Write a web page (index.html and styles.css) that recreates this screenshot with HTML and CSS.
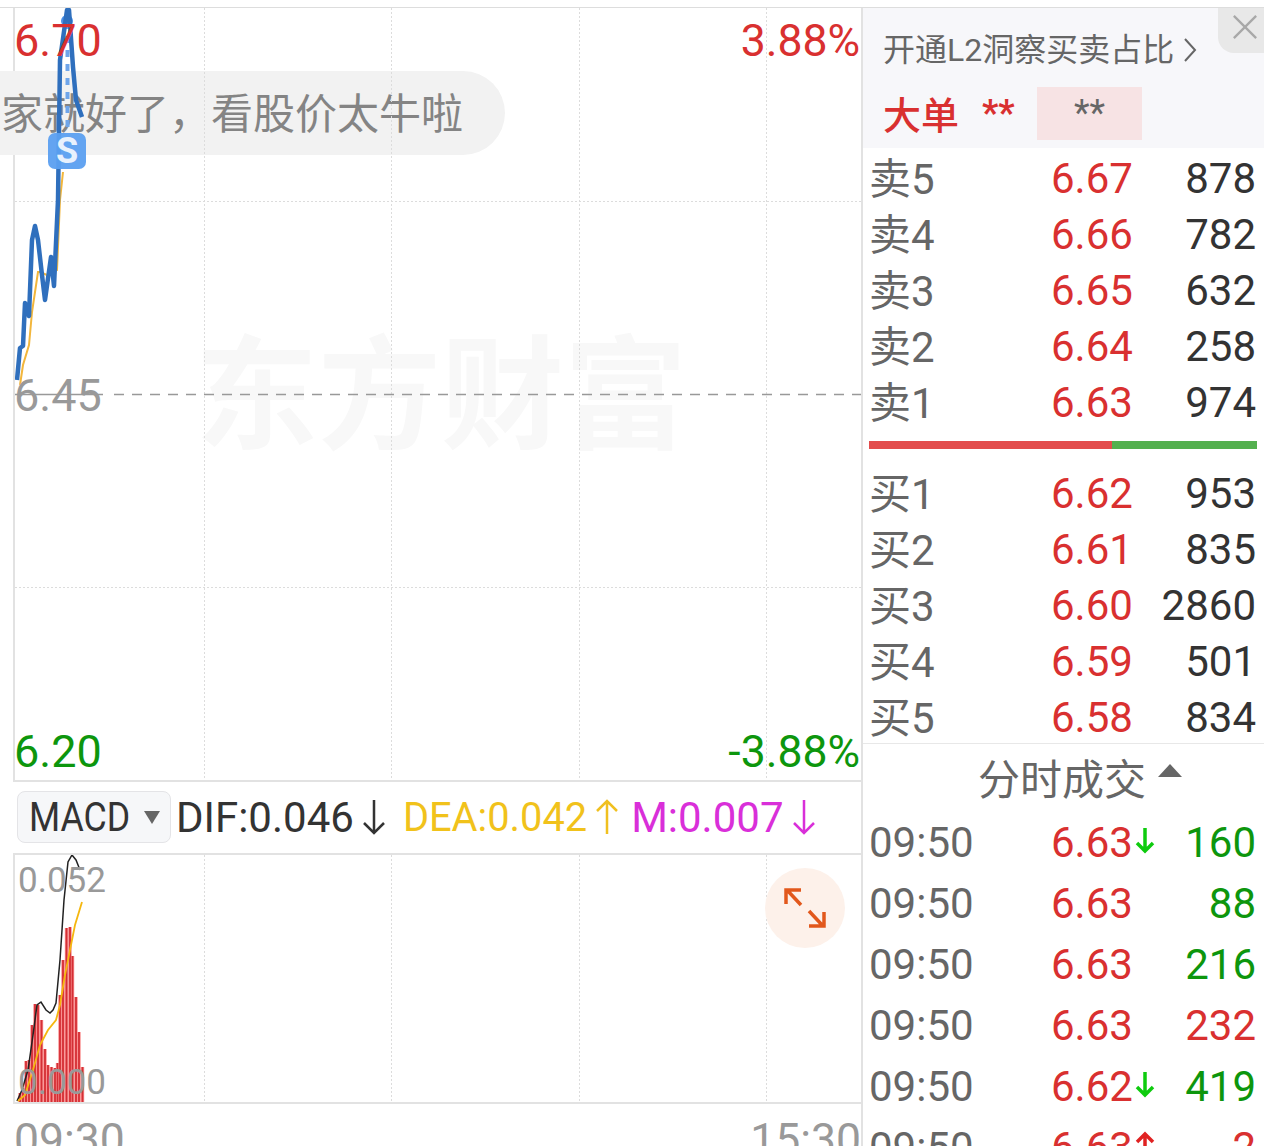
FILE: index.html

```html
<!DOCTYPE html>
<html lang="zh-CN">
<head>
<meta charset="utf-8"/>
<title>分时</title>
<link rel="stylesheet" href="styles.css">
</head>
<body>
<div class="page">
  <div class="left">
    <div class="chart">
      <div class="watermark">东方财富</div>
      <div class="bubble">家就好了，看股价太牛啦</div>
      <svg class="chart-svg" viewBox="15 8 846 772">
        <path d="M204.500 8V780M391.500 8V780M579.500 8V780M766.500 8V780M15 201.500H861M15 587.500H861" stroke="#dcdcdc" stroke-width="1" stroke-dasharray="2 2" fill="none"/>
        <path d="M15 394.500H103" stroke="#999" stroke-width="1.500" fill="none"/>
        <path d="M114 394.500H861" stroke="#999" stroke-width="1.500" stroke-dasharray="10 8" fill="none"/>
        <path d="M67.500 22V133" stroke="#6fa5ea" stroke-width="4" stroke-dasharray="7 7" fill="none"/>
        <circle cx="67" cy="21" r="6" fill="#4a90e8"/>
        <path d="M20 385L23 365L29 345L32 312L38 272H40L47 275L50 272L57 270L60 200L63 172" stroke="#f2b63c" stroke-width="2" fill="none"/>
        <path d="M17 380L20 348L23 346L25 303L29 316L32 240L35 226L38 240L42 275L45 300L51 257L54 286L58 200L60 60L67 10L69 10L73 67L76 100L82 117" stroke="#2f6fbd" stroke-width="4.500" fill="none" stroke-linejoin="round"/>
        <rect x="48" y="133" width="38" height="36" rx="7" fill="#5b9ff0" opacity=".95"/>
      </svg>
      <span class="s-mark">S</span>
      <span class="tag tag-l up tag-top">6.70</span>
      <span class="tag tag-r up tag-top">3.88%</span>
      <span class="tag tag-l grey tag-mid">6.45</span>
      <span class="tag tag-l down tag-bot">6.20</span>
      <span class="tag tag-r down tag-bot">-3.88%</span>
    </div>

    <div class="macd-bar">
      <div class="macd-select"><span class="macd-name">MACD</span><i class="tri-down"></i></div>
      <span class="val c-dark">DIF:0.046</span>
      <svg class="arrow" viewBox="0 0 24 36"><path d="M12 1V34M2 24L12 34L22 24" stroke="#333" stroke-width="2.500" fill="none"/></svg>
      <span class="val c-yellow dea">DEA:0.042</span>
      <svg class="arrow" viewBox="0 0 24 36"><path d="M12 35V2M2 12L12 2L22 12" stroke="#f0c020" stroke-width="2.500" fill="none"/></svg>
      <span class="val c-pink mval">M:0.007</span>
      <svg class="arrow" viewBox="0 0 24 36"><path d="M12 1V34M2 24L12 34L22 24" stroke="#d92fd9" stroke-width="2.500" fill="none"/></svg>
    </div>

    <div class="sub-chart">
      <svg class="chart-svg" viewBox="15 855 846 247">
        <path d="M204.500 855V1102M391.500 855V1102M579.500 855V1102M766.500 855V1102" stroke="#dcdcdc" stroke-width="1" stroke-dasharray="2 2" fill="none"/>
        <path d="M20 1102V1093M23 1102V1088M26 1102V1061M29 1102V1060M32 1102V1025M35 1102V1004M38 1102V1005M41.500 1102V1020M45 1102V1049M48 1102V1065M51.500 1102V1067M55 1102V1068M57.500 1102V1063M60 1102V995M63 1102V960M66.500 1102V928M70 1102V927M72.500 1102V956M76 1102V997M79 1102V1032M82.500 1102V1067" stroke="#f98f8f" stroke-width="3.400" fill="none"/>
        <path d="M20 1102V1093M23 1102V1088M26 1102V1061M29 1102V1060M32 1102V1025M35 1102V1004M38 1102V1005M41.500 1102V1020M45 1102V1049M48 1102V1065M51.500 1102V1067M55 1102V1068M57.500 1102V1063M60 1102V995M63 1102V960M66.500 1102V928M70 1102V927M72.500 1102V956M76 1102V997M79 1102V1032M82.500 1102V1067" stroke="#d42f35" stroke-width="1.800" fill="none"/>
        <path d="M17 1101L22 1090L28 1070L33 1035L37 1005L41 1002L46 1010L50 1013L53 1010L56 1003L60 960L64 900L68 862L72 855L76 860L80 870" stroke="#222" stroke-width="1.500" fill="none"/>
        <path d="M18 1101L25 1095L33 1070L40 1045L48 1030L56 1020L60 1005L65 975L70 950L75 925L82 902" stroke="#f5b70f" stroke-width="1.800" fill="none"/>
      </svg>
      <span class="sub-tag sub-top">0.052</span>
      <span class="sub-tag sub-bot">0.000</span>
      <div class="expand">
        <svg viewBox="0 0 44 44" width="44" height="44"><path d="M3 18V4H18M4 4L18 19M41 26V40H26M40 40L26 25" stroke="#e2581c" stroke-width="3.500" fill="none"/></svg>
      </div>
    </div>

    <div class="time-axis"><span>09:30</span><span>15:30</span></div>
  </div>

  <div class="side">
    <div class="promo">
      <div class="close"><svg viewBox="0 0 28 28" width="26" height="26"><path d="M2 2L26 26M26 2L2 26" stroke="#a8a8a8" stroke-width="2.500"/></svg></div>
      <div class="promo-link">开通L2洞察买卖占比<svg viewBox="0 0 14 26" width="14" height="26"><path d="M2 2L12 13L2 24" stroke="#666" stroke-width="2" fill="none"/></svg></div>
      <div class="big-order">
        <span class="big-title">大单</span>
        <span class="big-stars">**</span>
        <span class="big-box">**</span>
      </div>
    </div>

    <div class="book">
      <div class="row"><span class="name">卖5</span><span class="up">6.67</span><span class="vol">878</span></div>
      <div class="row"><span class="name">卖4</span><span class="up">6.66</span><span class="vol">782</span></div>
      <div class="row"><span class="name">卖3</span><span class="up">6.65</span><span class="vol">632</span></div>
      <div class="row"><span class="name">卖2</span><span class="up">6.64</span><span class="vol">258</span></div>
      <div class="row"><span class="name">卖1</span><span class="up">6.63</span><span class="vol">974</span></div>
    </div>
    <div class="ratio"><div class="ratio-red"></div><div class="ratio-green"></div></div>
    <div class="book">
      <div class="row"><span class="name">买1</span><span class="up">6.62</span><span class="vol">953</span></div>
      <div class="row"><span class="name">买2</span><span class="up">6.61</span><span class="vol">835</span></div>
      <div class="row"><span class="name">买3</span><span class="up">6.60</span><span class="vol">2860</span></div>
      <div class="row"><span class="name">买4</span><span class="up">6.59</span><span class="vol">501</span></div>
      <div class="row"><span class="name">买5</span><span class="up">6.58</span><span class="vol">834</span></div>
    </div>

    <div class="trades-head">分时成交<i class="tri-up"></i></div>
    <div class="trades">
      <div class="row trade"><span class="name">09:50</span><span class="up">6.63<svg class="tick" viewBox="0 0 20 28"><path d="M10 2V25M2 17L10 25L18 17" stroke="#0ecb0e" stroke-width="3.500" fill="none"/></svg></span><span class="vol down">160</span></div>
      <div class="row trade"><span class="name">09:50</span><span class="up">6.63</span><span class="vol down">88</span></div>
      <div class="row trade"><span class="name">09:50</span><span class="up">6.63</span><span class="vol down">216</span></div>
      <div class="row trade"><span class="name">09:50</span><span class="up">6.63</span><span class="vol up">232</span></div>
      <div class="row trade"><span class="name">09:50</span><span class="up">6.62<svg class="tick" viewBox="0 0 20 28"><path d="M10 2V25M2 17L10 25L18 17" stroke="#0ecb0e" stroke-width="3.500" fill="none"/></svg></span><span class="vol down">419</span></div>
      <div class="row trade"><span class="name">09:50</span><span class="up">6.63<svg class="tick" viewBox="0 0 20 28"><path d="M10 26V3M2 11L10 3L18 11" stroke="#e02222" stroke-width="3.500" fill="none"/></svg></span><span class="vol up">2</span></div>
    </div>
  </div>
</div>
</body>
</html>
```

FILE: styles.css

```css
body { margin: 0; background: #fff; font-family: Roboto, "Noto Sans CJK SC", sans-serif; }
.page { position: relative; display: flex; height: 1146px; overflow: hidden; padding-top: 7px; box-sizing: border-box; }
.page::before { content: ""; position: absolute; left: 0; right: 0; top: 7px; height: 1px; background: #ddd; }
.up { color: #d93030; }
.down { color: #0d960d; }
.grey { color: #999; }

/* left column */
.left { width: 861px; flex: none; padding: 1px 0 0 13px; box-sizing: border-box; }
.chart { position: relative; width: 846px; height: 772px; border-left: 2px solid #e2e2e2; border-bottom: 2px solid #e2e2e2; }
.chart-svg { display: block; position: absolute; left: 0; top: 0; width: 100%; height: 100%; }
.watermark { position: absolute; left: 180px; top: 304px; font-size: 123px; font-weight: 700; line-height: 170px; color: #f8f8f8; white-space: nowrap; }
.bubble { position: absolute; left: -15px; top: 63px; width: 505px; height: 84px; box-sizing: border-box; padding: 2px 0 0 1px; background: #f2f2f2; border-radius: 0 42px 42px 0; font-size: 42px; line-height: 84px; color: #848484; white-space: nowrap; }
.s-mark { position: absolute; left: 33px; top: 124px; width: 38px; height: 38px; text-align: center; font-size: 36px; font-weight: 700; line-height: 38px; color: #e8f1fd; }
.tag { position: absolute; font-size: 45px; line-height: 50px; }
.tag-l { left: -1px; }
.tag-r { right: 1px; font-size: 44.5px; }
.tag-top { top: 8px; }
.tag-mid { top: 363px; }
.tag-bot { top: 719px; }

.macd-bar { display: flex; align-items: center; height: 71px; box-sizing: border-box; padding: 0 0 1px 4px; font-size: 42px; }
.macd-select { display: flex; align-items: center; justify-content: space-between; width: 154px; height: 52px; box-sizing: border-box; margin-right: 5px; padding: 0 10px 0 11px; background: #f6f7f9; border: 1px solid #e4e4e7; border-radius: 8px; }
.macd-name { display: inline-block; font-size: 41px; color: #333; transform: scaleX(.87); transform-origin: left center; width: 100px; }
.tri-down { width: 0; height: 0; border: 8px solid transparent; border-top: 13px solid #666; border-bottom: 0; }
.val { white-space: nowrap; }
.c-dark { color: #333; }
.c-yellow { color: #f1c21b; }
.c-pink { color: #d92fd9; }
.arrow { width: 24px; height: 36px; margin-left: 8px; flex: none; }
.dea { margin-left: 17px; font-size: 39.8px; }
.mval { margin-left: 12px; }

.sub-chart { position: relative; width: 846px; height: 247px; border-top: 2px solid #e2e2e2; border-left: 2px solid #e2e2e2; border-bottom: 2px solid #e2e2e2; }
.sub-tag { position: absolute; left: 3px; font-size: 35px; line-height: 40px; color: #999; }
.sub-top { top: 6px; }
.sub-bot { top: 208px; }
.expand { position: absolute; left: 750px; top: 13px; width: 80px; height: 80px; border-radius: 50%; background: #fdf1ea; display: flex; align-items: center; justify-content: center; }

.time-axis { display: flex; justify-content: space-between; width: 848px; padding-left: 1px; box-sizing: border-box; font-size: 44.5px; line-height: 50px; color: #999; margin-top: 11px; }

/* right column */
.side { flex: 1; border-left: 2px solid #e2e2e2; padding-top: 1px; }
.promo { position: relative; height: 140px; background: #f7f7fa; box-sizing: border-box; padding: 24px 0 0 20px; }
.close { position: absolute; right: 0; top: 0; width: 46px; height: 45px; box-sizing: border-box; padding: 6px 0 0 14px; background: #e8e8e8; border-bottom-left-radius: 16px; }
.promo-link { display: flex; align-items: center; gap: 9px; font-size: 32px; line-height: 36px; color: #666; }
.big-order { display: flex; align-items: flex-start; margin-top: 19px; }
.big-title { width: 99px; font-size: 38px; font-weight: 500; line-height: 53px; color: #d93030; padding-top: 3px; box-sizing: border-box; }
.big-stars { width: 55px; font-size: 36px; font-weight: 700; line-height: 53px; color: #d93030; }
.big-box { width: 105px; height: 53px; background: #f7e3e4; text-align: center; font-size: 36px; line-height: 53px; color: #666; }

.row { display: grid; grid-template-columns: 182px 1fr auto; align-items: center; height: 56px; padding: 0 8px 0 6px; font-size: 42px; }
.name { color: #666; }
.book .name { transform: translateY(-3px); }
.vol { text-align: right; }
.book .vol { color: #333; }
.ratio { display: flex; height: 8px; margin: 13px 7px 14px 6px; }
.ratio-red { width: 243px; background: #e34c4c; }
.ratio-green { flex: 1; background: #53b04e; }

.trades-head { display: flex; align-items: center; justify-content: center; gap: 12px; height: 69px; padding: 0 0 4px 33px; box-sizing: border-box; border-top: 1px solid #e8e8e8; font-size: 42px; color: #666; }
.tri-up { width: 0; height: 0; margin-bottom: 12px; border: 12px solid transparent; border-bottom: 13px solid #666; border-top: 0; }
.trade { height: 61px; }
.tick { width: 20px; height: 28px; vertical-align: 3px; margin-left: 2px; }
```
